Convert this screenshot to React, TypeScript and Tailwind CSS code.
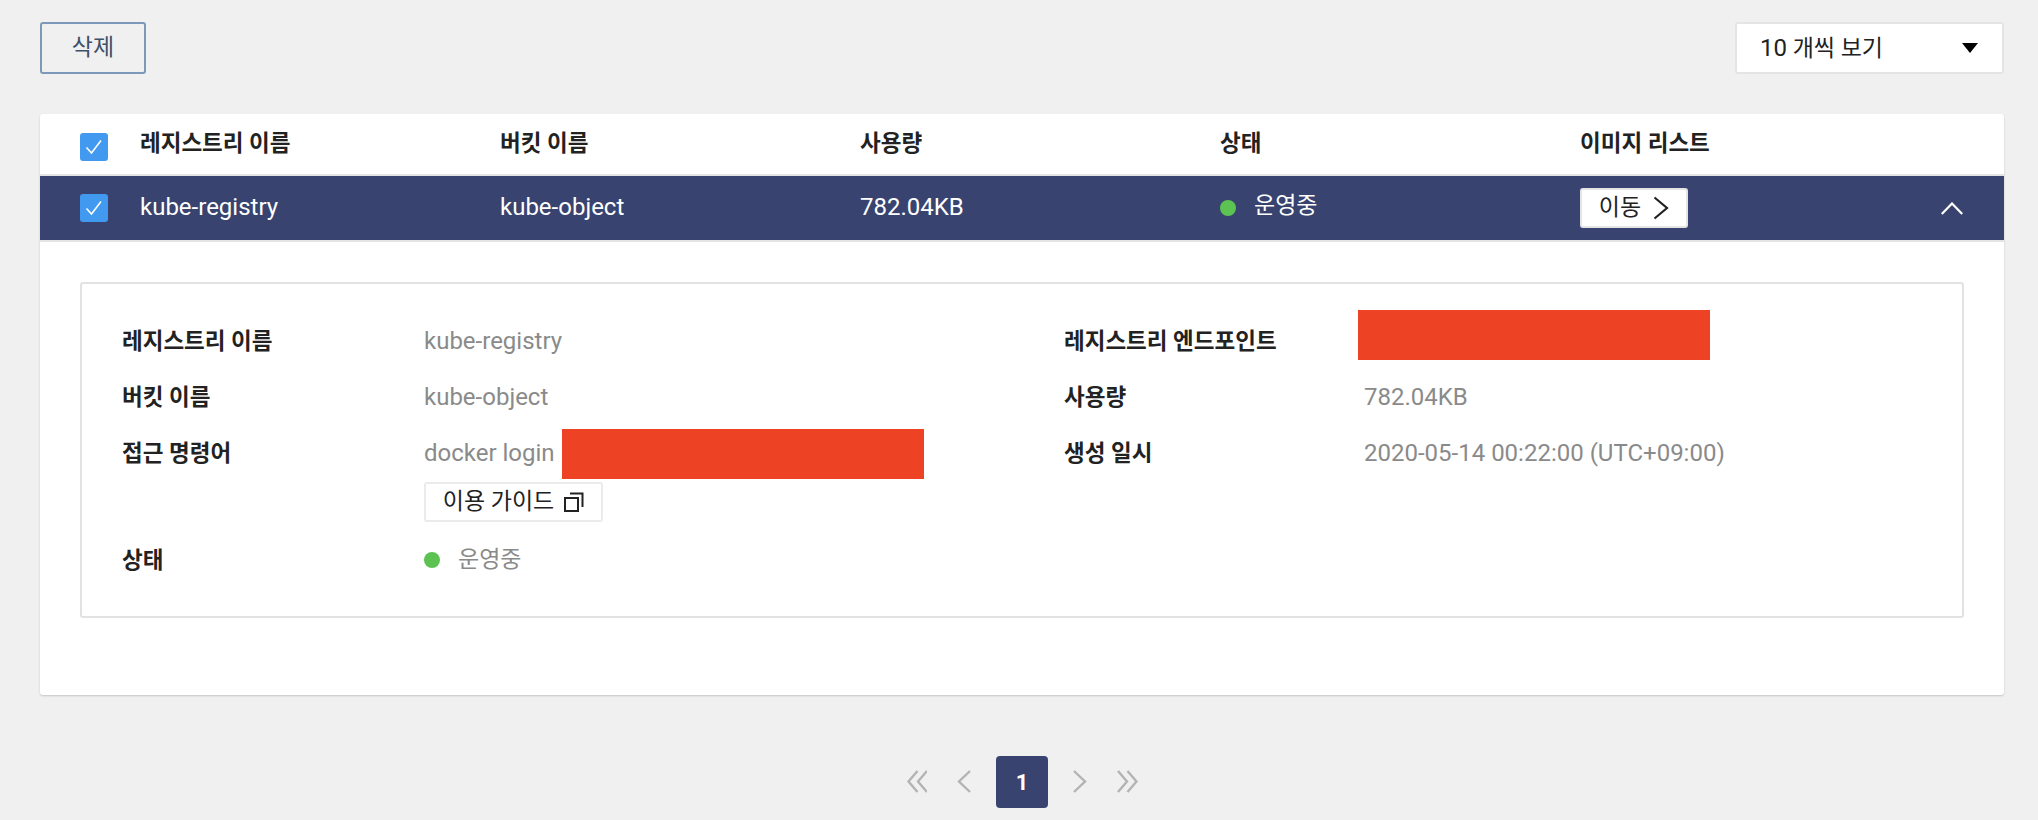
const font = "font-['Roboto','Noto_Sans_CJK_KR',sans-serif]";

function Check() {
  return (
    <span className="flex h-7 w-7 items-center justify-center rounded-[3px] bg-[#4299f0]">
      <svg width="18" height="16" viewBox="0 0 18 16" fill="none" stroke="#fff" strokeWidth="1.6">
        <path d="M1.5 8.5 L6.5 14 L16 1.5" />
      </svg>
    </span>
  );
}

function Chev({ d, w }: { d: string; w: number }) {
  return (
    <svg width={w} height="24" viewBox={`0 0 ${w} 24`} fill="none" stroke="#b3b3b3" strokeWidth="2.4">
      <path d={d} />
    </svg>
  );
}

function Row({ label, children, labelClass }: { label: string; children: React.ReactNode; labelClass: string }) {
  return (
    <div className="flex">
      <div className={`${labelClass} shrink-0 text-[22.5px] leading-[56px] font-semibold text-[#222]`}>{label}</div>
      <div className="text-[24px] leading-[56px] text-[#8a8a8a]">{children}</div>
    </div>
  );
}

export default function App() {
  return (
    <div className={`${font} h-[820px] overflow-hidden bg-[#f0f0f0] pl-10 pr-[34px] pt-[22px]`}>
      <div className="flex items-start justify-between">
        <button className="h-[52px] w-[106px] rounded-[3px] border-2 border-[#7e99b8] text-[23px] text-[#3e5068]">삭제</button>
        <div className="flex h-[52px] w-[269px] items-center justify-between rounded-[3px] border-2 border-[#e4e4e4] bg-white pl-[23px] pr-[24px] text-[23px] text-[#222]">
          <span><span className="text-[24px]">10</span> 개씩 보기</span>
          <svg width="16" height="10" viewBox="0 0 16 10"><path d="M0 0H16L8 10Z" fill="#000" /></svg>
        </div>
      </div>

      <div className="mt-10 h-[581px] rounded-[3px] bg-white shadow-[0_1px_2px_rgba(0,0,0,0.18)]">
        <div className="flex h-[62px] items-center border-b-2 border-[#e4e4e4] pl-10 text-[22.5px] font-semibold text-[#222]">
          <div className="mt-[6px] mr-8"><Check /></div>
          <div className="w-[360px]">레지스트리 이름</div>
          <div className="w-[360px]">버킷 이름</div>
          <div className="w-[360px]">사용량</div>
          <div className="w-[360px]">상태</div>
          <div>이미지 리스트</div>
        </div>
        <div className="flex h-[66px] items-center border-b-2 border-[#e4e4e4] bg-[#38446f] pl-10 pr-[41px] text-[24px] text-white">
          <div className="mr-8"><Check /></div>
          <div className="w-[360px] pb-[3px]">kube-registry</div>
          <div className="w-[360px] pb-[3px]">kube-object</div>
          <div className="w-[360px] pb-[3px]">782.04KB</div>
          <div className="flex w-[360px] items-center gap-[18px]">
            <span className="h-4 w-4 rounded-full bg-[#5cc352]" />
            <span className="pb-[3px] text-[23px]">운영중</span>
          </div>
          <button className="flex h-10 w-[108px] items-center justify-center gap-[12px] rounded-[3px] border-2 border-[#e4e4e4] bg-white text-[23px] text-[#222]">
            이동
            <svg width="16" height="24" viewBox="0 0 16 24" fill="none" stroke="#222" strokeWidth="2.2"><path d="M1.5 1.5 L14 12 L1.5 22.5" /></svg>
          </button>
          <svg className="ml-auto" width="22" height="13" viewBox="0 0 22 13" fill="none" stroke="#fff" strokeWidth="2.2"><path d="M0.8 12 L11 1.5 L21.2 12" /></svg>
        </div>

        <div className="mx-10 mt-10 flex h-[336px] rounded-[3px] border-2 border-[#e2e2e2] pl-10 pt-[29px]">
          <div className="w-[942px]">
            <Row labelClass="w-[302px]" label="레지스트리 이름">kube-registry</Row>
            <Row labelClass="w-[302px]" label="버킷 이름">kube-object</Row>
            <Row labelClass="w-[302px]" label="접근 명령어">
              <div className="relative">
                docker login
                <span className="absolute left-[138px] top-[4px] h-[50px] w-[362px] bg-[#ee4225]" />
              </div>
              <button className="mt-px flex h-10 w-[179px] items-center justify-center gap-[10px] rounded-[3px] border-2 border-[#ebebeb] text-[23px] text-[#222]">
                이용 가이드
                <svg width="20" height="20" viewBox="0 0 20 20" fill="none" stroke="#222" strokeWidth="2"><path d="M1 6H14V19H1Z" /><path d="M6 1.5H18.5V15" /></svg>
              </button>
            </Row>
            <div className="mt-[10px]">
              <Row labelClass="w-[302px]" label="상태">
                <div className="flex items-center gap-[18px]">
                  <span className="h-4 w-4 rounded-full bg-[#5cc352]" />
                  <span className="text-[23px]">운영중</span>
                </div>
              </Row>
            </div>
          </div>
          <div>
            <Row labelClass="w-[300px]" label="레지스트리 엔드포인트">
              <div className="relative h-[56px] w-[300px]">
                <span className="absolute -left-[6px] -top-[3px] h-[50px] w-[352px] bg-[#ee4225]" />
              </div>
            </Row>
            <Row labelClass="w-[300px]" label="사용량">782.04KB</Row>
            <Row labelClass="w-[300px]" label="생성 일시">2020-05-14 00:22:00 (UTC+09:00)</Row>
          </div>
        </div>
      </div>

      <div className="mt-[61px] flex items-center justify-center">
        <Chev w={21} d="M11.5 1 L2.5 11.5 L11.5 22 M21 1 L12 11.5 L21 22" />
        <div className="ml-[30px]"><Chev w={14} d="M13 1 L2 11.5 L13 22" /></div>
        <div className="mx-[25px] flex h-[52px] w-[52px] items-center justify-center rounded-[4px] bg-[#38446f] text-[22px] font-bold text-white">1</div>
        <Chev w={14} d="M1 1 L12 11.5 L1 22" />
        <div className="ml-[30px]"><Chev w={21} d="M1 1 L10 11.5 L1 22 M10.5 1 L19.5 11.5 L10.5 22" /></div>
      </div>
    </div>
  );
}
